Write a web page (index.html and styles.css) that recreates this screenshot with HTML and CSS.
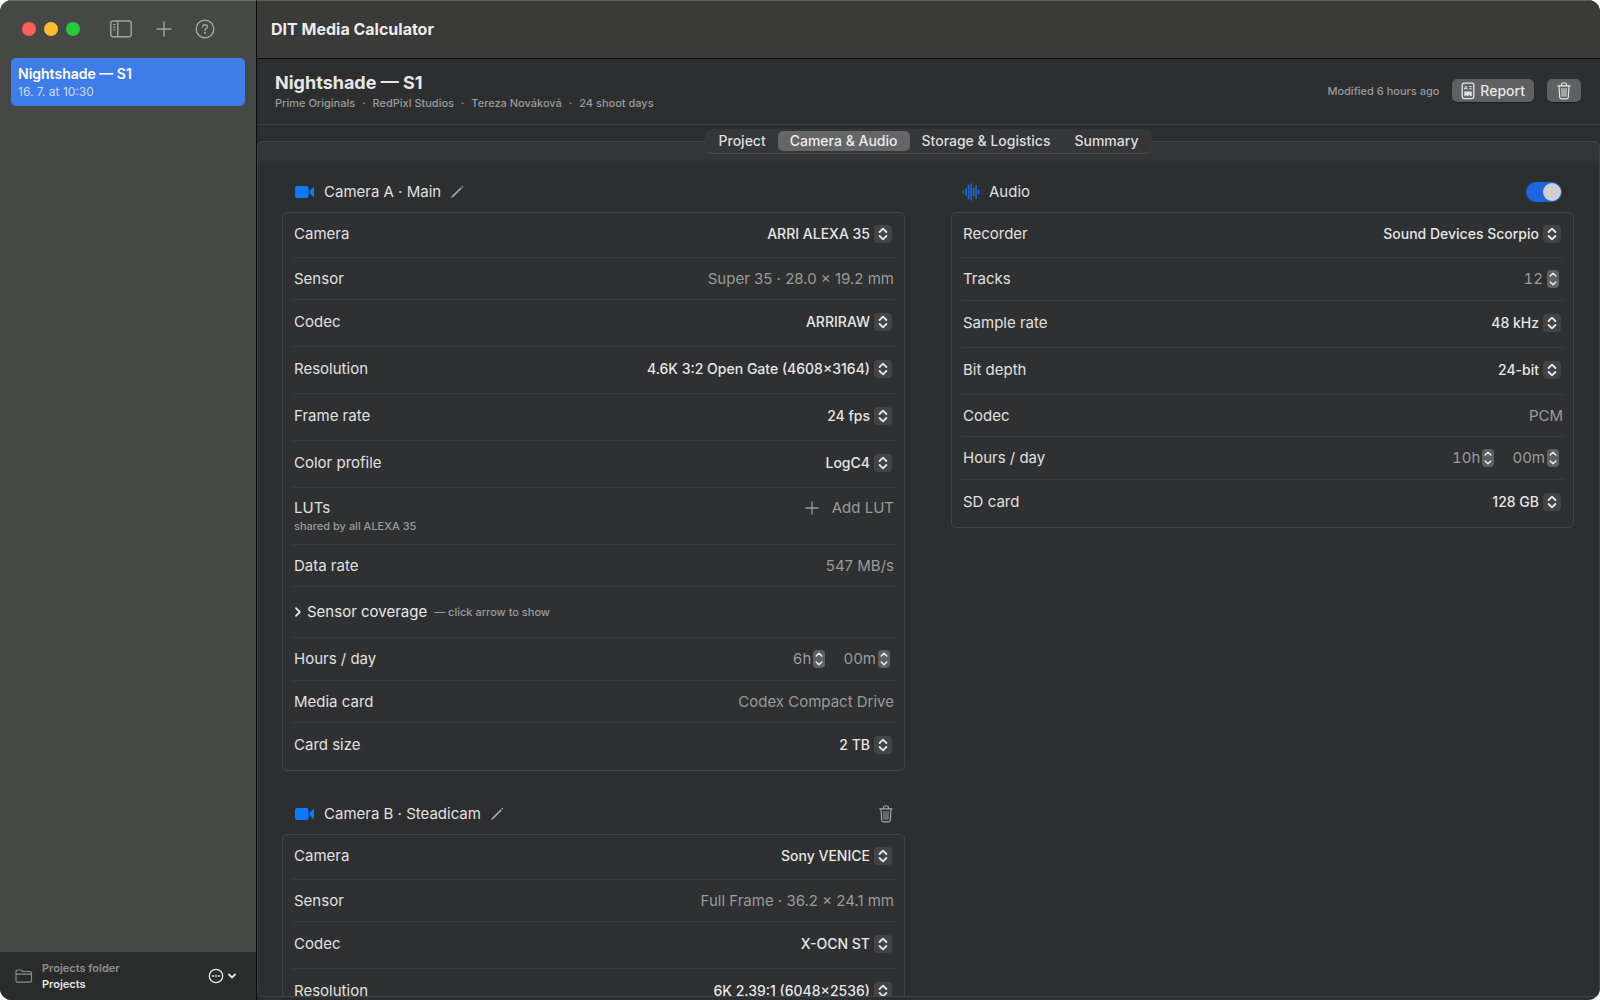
FILE: index.html
```html
<!DOCTYPE html>
<html lang="en">
<head>
<meta charset="utf-8">
<title>DIT Media Calculator</title>
<link rel="stylesheet" href="styles.css">
</head>
<body>
<svg class="defs" aria-hidden="true">
  <symbol id="updown" viewBox="0 0 18 18"><path d="M5.600 7 9 3.600 12.400 7M5.600 11 9 14.400 12.400 11" fill="none" stroke="currentColor" stroke-width="1.800" stroke-linecap="round" stroke-linejoin="round"/></symbol>
  <symbol id="up" viewBox="0 0 12 9"><path d="M3.200 6 6 3.200 8.800 6" fill="none" stroke="currentColor" stroke-width="1.500" stroke-linecap="round" stroke-linejoin="round"/></symbol>
  <symbol id="down" viewBox="0 0 12 9"><path d="M3.200 3 6 5.800 8.800 3" fill="none" stroke="currentColor" stroke-width="1.500" stroke-linecap="round" stroke-linejoin="round"/></symbol>
  <symbol id="video" viewBox="0 0 20 14"><rect x="0" y="1" width="13.500" height="12" rx="2" fill="currentColor"/><path d="M14.600 5.400 18 2.400q1-.7 1 .4v8.400q0 1.100-1 .4L14.600 8.600z" fill="currentColor"/></symbol>
  <symbol id="pencil" viewBox="0 0 14 14"><path d="M2.200 11.800 11.200 2.800" stroke="currentColor" stroke-width="1.700" fill="none"/><path d="M1 13 1.700 11.300 2.700 12.300zM11.300 1.700l.8-.7q.6-.2.900.1.300.4 0 .9l-.7.700z" fill="currentColor"/></symbol>
  <symbol id="trash" viewBox="0 0 14 18"><g fill="none" stroke="currentColor" stroke-width="1.200" stroke-linecap="round" stroke-linejoin="round"><path d="M.8 3.800H13.200M4.600 3.600V2.200q0-1.200 1.200-1.200h2.400q1.200 0 1.200 1.200v1.400M2 4l.7 11.300q.1 1.500 1.500 1.500h5.600q1.400 0 1.500-1.500L12 4"/><path d="M4.900 6.500l.2 7.800M7 6.500v7.800M9.100 6.500l-.2 7.800" stroke-width="1"/></g></symbol>
</svg>
<div class="window">
  <aside class="sidebar">
    <div class="toolbar">
      <div class="lights"><i class="red"></i><i class="yellow"></i><i class="green"></i></div>
      <button class="icon-btn" aria-label="Toggle sidebar"><svg width="22" height="18" viewBox="0 0 22 18" fill="none" stroke="currentColor" stroke-width="1.400"><rect x=".8" y="1" width="20.400" height="15.800" rx="2"/><path d="M7.800 1v15.800"/><path d="M3 4.500h2.600M3 7.200h2.600M3 9.900h2.600" stroke-width="1"/></svg></button>
      <button class="icon-btn plus-btn" aria-label="New project"><svg width="16" height="16" viewBox="0 0 16 16" fill="none" stroke="currentColor" stroke-width="1.400" stroke-linecap="round"><path d="M8 1v14M1 8h14"/></svg></button>
      <button class="icon-btn help-btn" aria-label="Help"><svg width="20" height="20" viewBox="0 0 20 20" fill="none" stroke="currentColor" stroke-width="1.400" stroke-linecap="round"><circle cx="10" cy="10" r="8.800"/><path d="M7.500 8q.1-2.300 2.500-2.300T12.500 7.800q0 1.100-1.300 1.900-1.200.7-1.200 1.700"/><circle cx="10" cy="14" r=".4" fill="currentColor"/></svg></button>
    </div>
    <nav class="projects">
      <a class="project" href="#nightshade"><strong>Nightshade — S1</strong><span>16. 7. at 10:30</span></a>
    </nav>
    <footer class="folder">
      <svg width="18" height="16" viewBox="0 0 18 16" fill="none" stroke="currentColor" stroke-width="1.200"><path d="M1 12.500V3.600Q1 2 2.600 2h3q.7 0 1.200.5l.5.500q.5.500 1.200.5h6.400q1.600 0 1.600 1.600v7.400q0 1.600-1.600 1.600H2.600Q1 14.100 1 12.500zM1 6.200h15.500"/></svg>
      <div class="folder-text"><span>Projects folder</span><strong>Projects</strong></div>
      <button class="more" aria-label="Folder options"><svg width="16" height="16" viewBox="0 0 16 16"><circle cx="8" cy="8" r="6.700" fill="none" stroke="currentColor" stroke-width="1.300"/><g fill="currentColor"><circle cx="5" cy="8" r="1"/><circle cx="8" cy="8" r="1"/><circle cx="11" cy="8" r="1"/></g></svg><svg width="10" height="8" viewBox="0 0 10 8"><path d="M2 2.500 5 5.500 8 2.500" fill="none" stroke="currentColor" stroke-width="1.800" stroke-linecap="round" stroke-linejoin="round"/></svg></button>
    </footer>
  </aside>

  <main class="main">
    <div class="titlebar">DIT Media Calculator</div>
    <header class="project-head">
      <div class="head-text">
        <h1>Nightshade — S1</h1>
        <p class="meta"><span>Prime Originals</span><span>·</span><span>RedPixl Studios</span><span>·</span><span>Tereza Nováková</span><span>·</span><span>24 shoot days</span></p>
      </div>
      <span class="modified">Modified 6 hours ago</span>
      <button class="push report"><svg width="14" height="18" viewBox="0 0 14 18"><rect x="1.200" y="1.200" width="11.600" height="15.400" rx="2" fill="none" stroke="currentColor" stroke-width="1.300"/><path d="M3.300 7.500 4.800 4l1.500 3.500M3.900 6.500h1.800M8 4.600h2.800M8 6.800h2.800" fill="none" stroke="currentColor" stroke-width=".9"/><path d="M3.300 9.500h7.400v4.700H9.300l-1-1.700-1.100 1.700H6L5 12.600l-.7 1.600h-1z" fill="currentColor"/></svg>Report</button>
      <button class="push remove" aria-label="Delete project"><svg width="14" height="18"><use href="#trash"/></svg></button>
    </header>

    <div class="tabs" role="tablist">
      <button role="tab" aria-selected="false">Project</button>
      <button role="tab" aria-selected="true">Camera &amp; Audio</button>
      <button role="tab" aria-selected="false">Storage &amp; Logistics</button>
      <button role="tab" aria-selected="false">Summary</button>
    </div>

    <div class="pane" role="tabpanel">
      <div class="column">
        <section class="group">
          <div class="group-head">
            <svg class="blue" width="20" height="14"><use href="#video"/></svg>
            <h2>Camera A · Main</h2>
            <button class="icon-btn" aria-label="Rename Camera A"><svg width="14" height="14"><use href="#pencil"/></svg></button>
          </div>
          <div class="panel">
            <div class="row pick"><label for="a-camera">Camera</label><span class="picker"><select id="a-camera"><option>ARRI ALEXA 35</option></select><svg><use href="#updown"/></svg></span></div>
            <div class="row"><span>Sensor</span><span class="value">Super 35 · 28.0 × 19.2 mm</span></div>
            <div class="row pick"><label for="a-codec">Codec</label><span class="picker"><select id="a-codec"><option>ARRIRAW</option></select><svg><use href="#updown"/></svg></span></div>
            <div class="row pick"><label for="a-res">Resolution</label><span class="picker"><select id="a-res"><option>4.6K 3:2 Open Gate (4608×3164)</option></select><svg><use href="#updown"/></svg></span></div>
            <div class="row pick"><label for="a-fps">Frame rate</label><span class="picker"><select id="a-fps"><option>24 fps</option></select><svg><use href="#updown"/></svg></span></div>
            <div class="row pick"><label for="a-color">Color profile</label><span class="picker"><select id="a-color"><option>LogC4</option></select><svg><use href="#updown"/></svg></span></div>
            <div class="row luts"><div class="stack"><span>LUTs</span><small>shared by all ALEXA 35</small></div><button class="add"><svg width="14" height="14" viewBox="0 0 14 14"><path d="M7 1v12M1 7h12" stroke="currentColor" stroke-width="1.300" stroke-linecap="round"/></svg>Add LUT</button></div>
            <div class="row"><span>Data rate</span><span class="value">547 MB/s</span></div>
            <details class="row coverage"><summary><svg width="8" height="12" viewBox="0 0 8 12"><path d="M2 2.200 5.800 6 2 9.800" fill="none" stroke="currentColor" stroke-width="1.800" stroke-linecap="round" stroke-linejoin="round"/></svg>Sensor coverage<small>— click arrow to show</small></summary></details>
            <div class="row step"><label for="a-hours">Hours / day</label><span class="steppers"><span class="stepper"><input id="a-hours" type="text" value="6h"><span class="arrows"><button aria-label="More hours"><svg><use href="#up"/></svg></button><button aria-label="Fewer hours"><svg><use href="#down"/></svg></button></span></span><span class="stepper"><input type="text" value="00m" aria-label="Minutes per day"><span class="arrows"><button aria-label="More minutes"><svg><use href="#up"/></svg></button><button aria-label="Fewer minutes"><svg><use href="#down"/></svg></button></span></span></span></div>
            <div class="row"><span>Media card</span><span class="value">Codex Compact Drive</span></div>
            <div class="row pick"><label for="a-card">Card size</label><span class="picker"><select id="a-card"><option>2 TB</option></select><svg><use href="#updown"/></svg></span></div>
          </div>
        </section>

        <section class="group">
          <div class="group-head">
            <svg class="blue" width="20" height="14"><use href="#video"/></svg>
            <h2>Camera B · Steadicam</h2>
            <button class="icon-btn" aria-label="Rename Camera B"><svg width="14" height="14"><use href="#pencil"/></svg></button>
            <button class="icon-btn end" aria-label="Delete Camera B"><svg width="14" height="18"><use href="#trash"/></svg></button>
          </div>
          <div class="panel">
            <div class="row pick"><label for="b-camera">Camera</label><span class="picker"><select id="b-camera"><option>Sony VENICE</option></select><svg><use href="#updown"/></svg></span></div>
            <div class="row"><span>Sensor</span><span class="value">Full Frame · 36.2 × 24.1 mm</span></div>
            <div class="row pick"><label for="b-codec">Codec</label><span class="picker"><select id="b-codec"><option>X-OCN ST</option></select><svg><use href="#updown"/></svg></span></div>
            <div class="row pick"><label for="b-res">Resolution</label><span class="picker"><select id="b-res"><option>6K 2.39:1 (6048×2536)</option></select><svg><use href="#updown"/></svg></span></div>
          </div>
        </section>
      </div>

      <div class="column">
        <section class="group">
          <div class="group-head">
            <svg class="blue wave" width="20" height="18" viewBox="0 0 20 18"><path d="M2.500 8v2M5 6v6M7.500 2.500v13M10 1v16M12.500 5v8M15 2.500v13M17.500 7v4" stroke="currentColor" stroke-width="1.500" stroke-linecap="round"/></svg>
            <h2><label for="audio-on">Audio</label></h2>
            <input id="audio-on" class="switch end" type="checkbox" role="switch" checked>
          </div>
          <div class="panel">
            <div class="row pick"><label for="recorder">Recorder</label><span class="picker"><select id="recorder"><option>Sound Devices Scorpio</option></select><svg><use href="#updown"/></svg></span></div>
            <div class="row step"><label for="tracks">Tracks</label><span class="steppers"><span class="stepper spaced"><input id="tracks" type="text" value="12"><span class="arrows"><button aria-label="More tracks"><svg><use href="#up"/></svg></button><button aria-label="Fewer tracks"><svg><use href="#down"/></svg></button></span></span></span></div>
            <div class="row pick"><label for="rate">Sample rate</label><span class="picker"><select id="rate"><option>48 kHz</option></select><svg><use href="#updown"/></svg></span></div>
            <div class="row pick"><label for="depth">Bit depth</label><span class="picker"><select id="depth"><option>24-bit</option></select><svg><use href="#updown"/></svg></span></div>
            <div class="row"><span>Codec</span><span class="value">PCM</span></div>
            <div class="row step"><label for="s-hours">Hours / day</label><span class="steppers"><span class="stepper"><input id="s-hours" type="text" value="10h"><span class="arrows"><button aria-label="More hours"><svg><use href="#up"/></svg></button><button aria-label="Fewer hours"><svg><use href="#down"/></svg></button></span></span><span class="stepper"><input type="text" value="00m" aria-label="Minutes per day"><span class="arrows"><button aria-label="More minutes"><svg><use href="#up"/></svg></button><button aria-label="Fewer minutes"><svg><use href="#down"/></svg></button></span></span></span></div>
            <div class="row pick"><label for="sd">SD card</label><span class="picker"><select id="sd"><option>128 GB</option></select><svg><use href="#updown"/></svg></span></div>
          </div>
        </section>
      </div>
    </div>
  </main>
</div>
</body>
</html>
```
FILE: styles.css
```css
* { box-sizing: border-box; }

body {
  margin: 0;
  background: #fff;
  color: #e0e0e0;
  font: 15px/20px Inter, "Liberation Sans", sans-serif;
}

h1, h2, p { margin: 0; }
svg { display: block; flex: none; }
.defs { width: 0; height: 0; position: absolute; }

button, select, input { font: inherit; color: inherit; margin: 0; }
button { display: flex; align-items: center; padding: 0; border: 0; background: none; white-space: nowrap; }

.window {
  display: grid;
  grid-template-columns: 257px minmax(0, 1fr);
  height: 100vh;
  overflow: hidden;
  border-radius: 12px;
  background: #2d2e2f;
}

/* Sidebar */
.sidebar { display: flex; flex-direction: column; min-height: 0; background: #464846; border-top: 1px solid #6b6c6b; border-right: 1px solid #090a0a; }
.toolbar { display: flex; align-items: center; height: 57px; padding: 0 22px 2px; color: #a3a5a3; }
.lights { display: flex; gap: 8px; margin-right: 30px; }
.lights i { width: 14px; height: 14px; border-radius: 50%; }
.red { background: #ff5f57; }
.yellow { background: #febc2e; }
.green { background: #28c840; }
.plus-btn { margin-left: 24px; }
.help-btn { margin-left: 23px; }
.icon-btn { color: #a3a4a4; }

.projects { flex: 1; padding: 0 11px; }
.project { display: flex; flex-direction: column; height: 48px; padding: 7px; border-radius: 5px; background: #3e7de8; color: #cbdcf8; font-size: 12px; line-height: 18px; text-decoration: none; }
.project strong { color: #fff; font-size: 14px; line-height: 18px; font-weight: 600; }

.folder { display: flex; align-items: center; gap: 9px; height: 48px; padding: 0 19px 0 15px; background: #2a2c2b; color: #8d8f8e; }
.folder-text { display: flex; flex: 1; flex-direction: column; font-size: 11px; line-height: 16px; font-weight: 600; }
.folder-text strong { color: #e6e6e6; font-weight: 600; }
.more { gap: 3px; color: #e6e6e6; }

/* Main area */
.main { display: flex; flex-direction: column; min-height: 0; }
.titlebar { height: 59px; padding: 18px 14px; border-top: 1px solid #5c5c5b; border-bottom: 1px solid #0c0d0d; background: #3a3a39; color: #ececec; font-size: 16px; font-weight: 700; }

.project-head { display: flex; align-items: center; height: 66px; padding: 0 19px 2px 18px; border-bottom: 1px solid #414243; }
.head-text { flex: 1; }
h1 { color: #e6e6e6; font-size: 18px; line-height: 24px; font-weight: 700; }
.meta { display: flex; gap: 7px; }
.meta, .modified { color: #9a9b9b; font-size: 11px; line-height: 16px; font-weight: 500; }
.push { height: 23px; border-radius: 5px; background: #5f6061; color: #e6e6e6; font-size: 14px; font-weight: 500; box-shadow: 0 1px 1px #1f2020; }
.report { gap: 5px; margin: 0 13px; padding: 0 9px; }
.remove { padding: 0 10px; }

.tabs { z-index: 1; display: flex; align-self: center; height: 25px; margin-top: 4px; padding: 2px; border-bottom: 1px solid #4c4d4e; border-radius: 7px; background: #353637; }
.tabs button { padding: 0 12px; border-radius: 5px; color: #dedede; font-size: 14px; line-height: 20px; font-weight: 500; }
.tabs [aria-selected="true"] { background: #656667; color: #ececec; }

.pane {
  display: grid;
  flex: 1;
  grid-template-columns: repeat(2, minmax(0, 1fr));
  gap: 46px;
  min-height: 0;
  margin: -13px 0 3px;
  padding: 40px 25px 0 24px;
  overflow: hidden;
  border: 1px solid #434445;
  border-radius: 6px;
  background: linear-gradient(#353637, #343536 16px, #2d2e2f 22px);
}

.column { display: flex; flex-direction: column; gap: 33px; }
.group-head { display: flex; align-items: center; gap: 9px; height: 20px; margin-bottom: 10px; padding: 0 12px 0 13px; }
h2 { font-size: 15px; line-height: 20px; font-weight: 400; }
.blue { color: #0a7bff; }
.wave { color: #1a6ce0; margin: 0 -1px 0 -3px; }
.group-head .end { margin-left: auto; }

.switch { width: 36px; height: 20px; padding: 1px; border-radius: 10px; background: #1c66e2; appearance: none; }
.switch::before { content: ""; display: block; width: 18px; height: 18px; border-radius: 50%; background: #cfcfcf; }
.switch:checked::before { margin-left: auto; }

.panel { padding: 0 9px; border: 1px solid #434445; border-radius: 5px; background: #2f3031; }
.row { display: flex; align-items: center; justify-content: space-between; height: 42px; padding: 0 1px 0 2px; border-bottom: 1px solid #393a3b; }
.row:last-child { border-bottom-color: transparent; }
.step { height: 43px; }
.pick { height: 47px; padding-bottom: 2px; }
.pick:first-child { height: 45px; }
.value, .add { color: #9a9b9b; }

.picker { display: flex; align-items: center; gap: 4px; margin-right: 2px; color: #e6e6e6; font-size: 14px; font-weight: 500; }
.picker select { padding: 0; border: 0; background: none; appearance: none; field-sizing: content; text-align-last: right; line-height: 20px; }
.picker svg { width: 18px; height: 18px; border-radius: 4px; background: #434445; pointer-events: none; }

.row small { color: #9a9b9b; font-size: 11px; line-height: 16px; font-weight: 500; }
.luts { align-items: flex-start; height: 57px; padding-top: 10px; }
.stack { display: flex; flex-direction: column; }
.add { gap: 13px; }
.coverage { height: 51px; }
.coverage summary { display: flex; align-items: center; gap: 5px; height: 50px; list-style: none; color: #e6e6e6; }
.coverage small { margin-left: 2px; }

.steppers { display: flex; gap: 18px; margin-right: 4px; color: #9a9b9b; font-variant-numeric: tabular-nums; }
.stepper { display: flex; align-items: center; gap: 2px; }
.spaced { gap: 4px; }
.stepper input { padding: 0; border: 0; background: none; field-sizing: content; text-align: right; }
.arrows { display: flex; flex-direction: column; overflow: hidden; border-radius: 4px; background: #5f6061; color: #ececec; }
.arrows svg { width: 12px; height: 9px; }
```
